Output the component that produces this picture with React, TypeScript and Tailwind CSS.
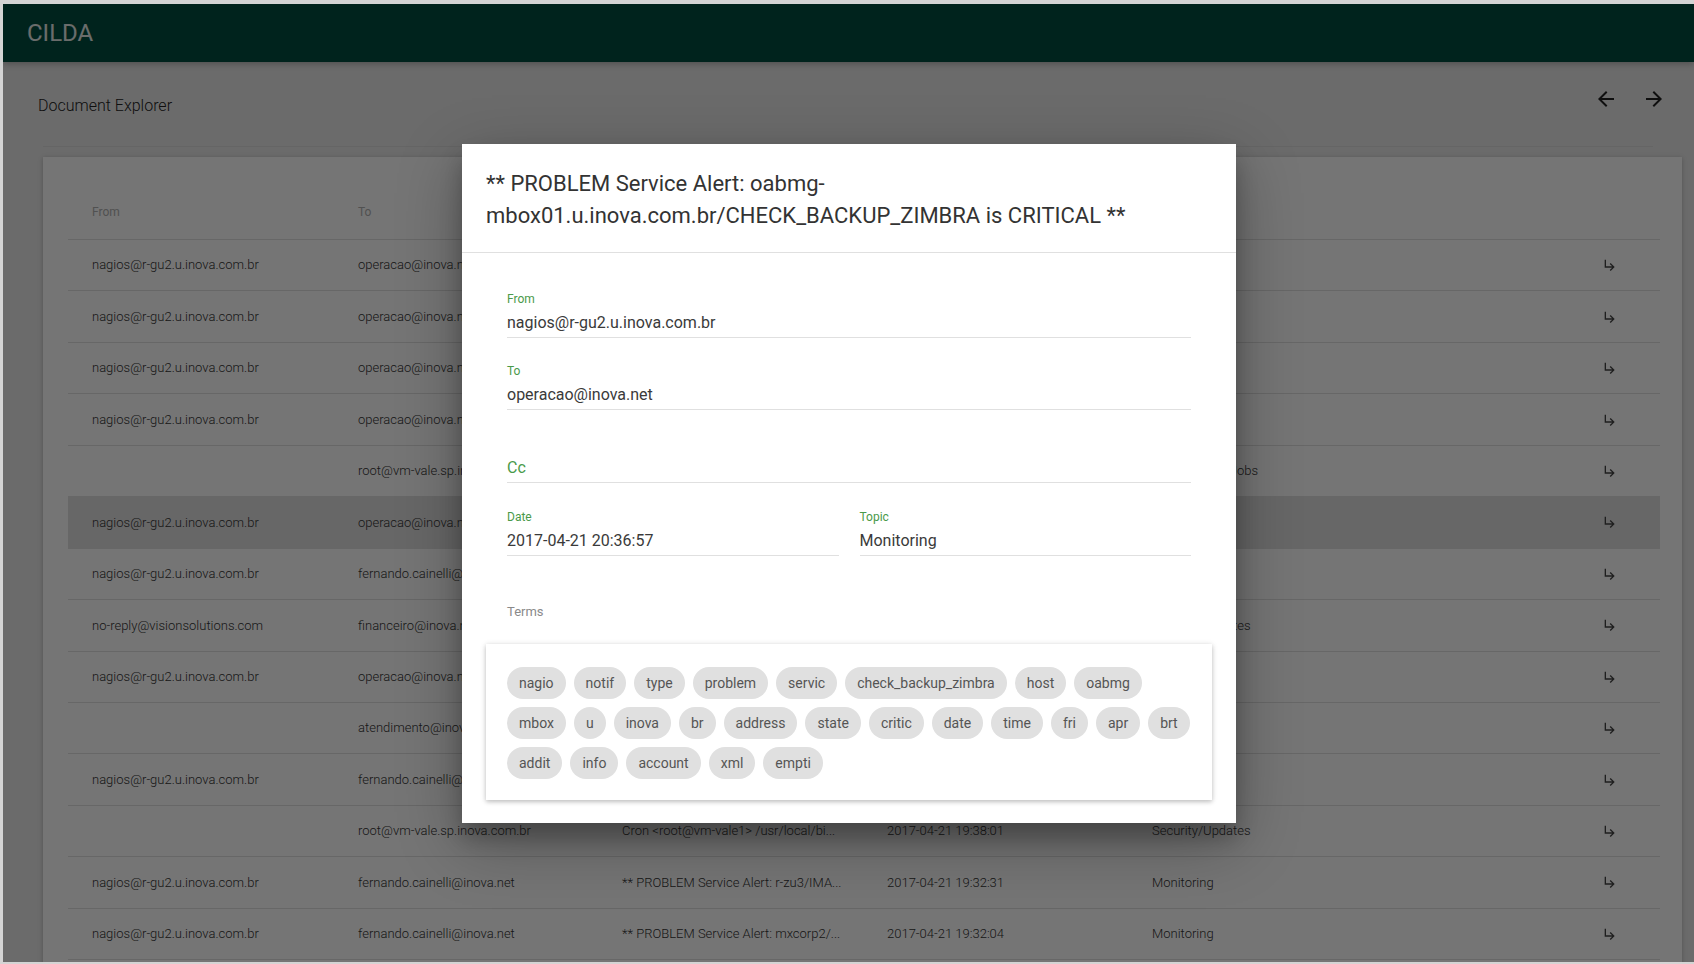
import React from 'react';
import { MdArrowBack, MdArrowForward, MdSubdirectoryArrowRight } from 'react-icons/md';

type Row = {
  from: string;
  to: string;
  subject: string;
  date: string;
  topic: string;
  selected?: boolean;
};

// cells that sit fully behind the dialog are left empty, they can't be seen
const rows: Row[] = [
  { from: 'nagios@r-gu2.u.inova.com.br', to: 'operacao@inova.net', subject: '', date: '', topic: '' },
  { from: 'nagios@r-gu2.u.inova.com.br', to: 'operacao@inova.net', subject: '', date: '', topic: '' },
  { from: 'nagios@r-gu2.u.inova.com.br', to: 'operacao@inova.net', subject: '', date: '', topic: '' },
  { from: 'nagios@r-gu2.u.inova.com.br', to: 'operacao@inova.net', subject: '', date: '', topic: '' },
  { from: '', to: 'root@vm-vale.sp.inova.com.br', subject: '', date: '', topic: 'Backup/Cron Jobs' },
  { from: 'nagios@r-gu2.u.inova.com.br', to: 'operacao@inova.net', subject: '', date: '', topic: '', selected: true },
  { from: 'nagios@r-gu2.u.inova.com.br', to: 'fernando.cainelli@inova.net', subject: '', date: '', topic: '' },
  { from: 'no-reply@visionsolutions.com', to: 'financeiro@inova.net', subject: '', date: '', topic: 'Security/Updates' },
  { from: 'nagios@r-gu2.u.inova.com.br', to: 'operacao@inova.net', subject: '', date: '', topic: '' },
  { from: '', to: 'atendimento@inova.net', subject: '', date: '', topic: '' },
  { from: 'nagios@r-gu2.u.inova.com.br', to: 'fernando.cainelli@inova.net', subject: '', date: '', topic: '' },
  { from: '', to: 'root@vm-vale.sp.inova.com.br', subject: 'Cron <root@vm-vale1> /usr/local/bi...', date: '2017-04-21 19:38:01', topic: 'Security/Updates' },
  { from: 'nagios@r-gu2.u.inova.com.br', to: 'fernando.cainelli@inova.net', subject: '** PROBLEM Service Alert: r-zu3/IMA...', date: '2017-04-21 19:32:31', topic: 'Monitoring' },
  { from: 'nagios@r-gu2.u.inova.com.br', to: 'fernando.cainelli@inova.net', subject: '** PROBLEM Service Alert: mxcorp2/...', date: '2017-04-21 19:32:04', topic: 'Monitoring' },
];

const terms = [
  'nagio', 'notif', 'type', 'problem', 'servic', 'check_backup_zimbra', 'host', 'oabmg',
  'mbox', 'u', 'inova', 'br', 'address', 'state', 'critic', 'date', 'time', 'fri', 'apr', 'brt',
  'addit', 'info', 'account', 'xml', 'empti',
];

const cols = 'grid grid-cols-[266px_264px_265px_265px_1fr_100px]';

const Field = ({ label, value, h = 'h-[72px]' }: { label: string; value: string; h?: string }) => (
  <div className={`${h} flex flex-col justify-end border-b border-[#e0e0e0]`}>
    <div className="text-[12px] leading-4 text-[#4a9a4a] mb-[2px]">{label}</div>
    <div className="h-[28px] flex items-center text-[16px] text-[#3a3a3a]">{value}</div>
  </div>
);

export default function App() {
  return (
    <div className="w-[1694px] h-[964px] bg-[#d4d4d4] pl-[3px] pt-[4px] overflow-hidden font-['Roboto',sans-serif]">
      <div className="relative h-[958px] bg-[#e9e9e9] overflow-hidden">
        {/* App bar */}
        <div className="h-[58px] bg-[#004d40] flex items-center pl-[24px] shadow-[0_2px_6px_rgba(0,0,0,0.25)]">
          <span className="text-[24px] text-[#e6ecea]">CILDA</span>
        </div>

        {/* Toolbar */}
        <div className="h-[84px] flex justify-between pl-[35px] pr-[16px]">
          <div className="pt-[34px] text-[16px] leading-5 font-light text-[#222]">Document Explorer</div>
          <div className="flex pt-[13px]">
            <button className="w-12 h-12 flex items-center justify-center text-[#222]">
              <MdArrowBack size={24} />
            </button>
            <button className="w-12 h-12 flex items-center justify-center text-[#222]">
              <MdArrowForward size={24} />
            </button>
          </div>
        </div>
        <div className="ml-[40px] w-[1610px] h-px bg-[#dcdcdc]" />

        {/* Documents table */}
        <div className="ml-[40px] mr-[12px] mt-[10px] bg-white pt-[27px] pl-[25px] pr-[22px] shadow-[0_1px_6px_rgba(0,0,0,0.12),0_1px_4px_rgba(0,0,0,0.12)] h-[900px]">
          <div className={`${cols} h-[56px] items-center border-b border-[#e0e0e0] text-[12px] text-[#b0b0b0]`}>
            <div className="pl-6">From</div>
            <div className="pl-6">To</div>
            <div className="pl-6" />
            <div className="pl-6" />
            <div className="pl-6" />
            <div />
          </div>
          {rows.map((r, i) => (
            <div
              key={i}
              className={`${cols} h-[51.45px] items-center border-b border-[#e0e0e0] text-[13px] font-light text-[#333] ${r.selected ? 'bg-[#e0e0e0]' : ''}`}
            >
              <div className="pl-6 truncate">{r.from}</div>
              <div className="pl-6 truncate">{r.to}</div>
              <div className="pl-6 truncate">{r.subject}</div>
              <div className="pl-6">{r.date}</div>
              <div className="pl-6">{r.topic}</div>
              <div className="flex justify-center text-[#444]">
                <MdSubdirectoryArrowRight size={16} />
              </div>
            </div>
          ))}
        </div>

        {/* Overlay */}
        <div className="absolute inset-0 bg-black/54" />

        {/* Dialog */}
        <div className="absolute left-[459px] top-[140px] w-[774px] bg-white shadow-[0_19px_60px_rgba(0,0,0,0.3),0_15px_20px_rgba(0,0,0,0.22)]">
          <div className="px-6 pt-6 pb-5 border-b border-[#e0e0e0] text-[22px] leading-8 text-[#333]">
            ** PROBLEM Service Alert: oabmg-mbox01.u.inova.com.br/CHECK_BACKUP_ZIMBRA is CRITICAL **
          </div>
          <div className="px-6 pb-[23px]">
            <div className="px-[21px] pt-[13px]">
              <Field label="From" value="nagios@r-gu2.u.inova.com.br" />
              <Field label="To" value="operacao@inova.net" />
              <div className="h-[73px] flex flex-col justify-end border-b border-[#e0e0e0]">
                <div className="h-[28px] flex items-center text-[16px] text-[#4a9a4a]">Cc</div>
              </div>
              <div className="grid grid-cols-2 gap-x-[21px]">
                <Field label="Date" value="2017-04-21 20:36:57" h="h-[73px]" />
                <Field label="Topic" value="Monitoring" h="h-[73px]" />
              </div>
              <div className="mt-[48px] text-[13px] leading-4 text-[#8a8a8a]">Terms</div>
            </div>
            <div className="mt-[24px] bg-white shadow-[0_1px_6px_rgba(0,0,0,0.16),0_2px_4px_rgba(0,0,0,0.14)] px-[21px] pt-[23px] pb-[21px]">
              <div className="flex flex-wrap gap-x-2 gap-y-2">
                {terms.map((t) => (
                  <span key={t} className="h-8 px-3 rounded-full bg-[#e0e0e0] text-[14px] leading-8 text-[#555]">
                    {t}
                  </span>
                ))}
              </div>
            </div>
          </div>
        </div>
      </div>
    </div>
  );
}
